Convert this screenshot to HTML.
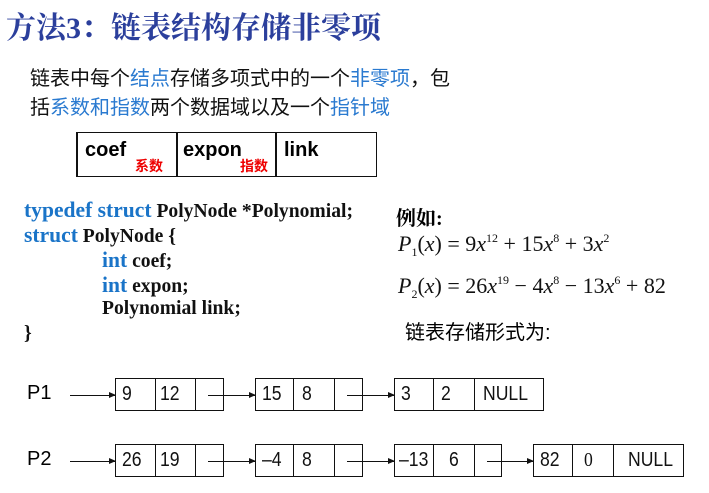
<!DOCTYPE html>
<html><head><meta charset="utf-8"><style>
body{margin:0;width:709px;height:493px;background:#fff;position:relative;overflow:hidden;font-family:"Liberation Sans","Noto Sans CJK SC",sans-serif}
.a{position:absolute;white-space:nowrap}
.t{font-family:"Liberation Serif","Noto Serif CJK SC",serif;font-weight:bold;color:#2b3f9c;font-size:30px;left:6px;top:3px}
.p{font-size:20px;color:#111;left:30px}
.b{color:#2a7ad0}
.code{font-family:"Liberation Serif",serif;font-weight:bold;font-size:20px;color:#111;transform:scaleX(0.98);transform-origin:left}
.kw{color:#1a74c8;font-size:22px}
.box{position:absolute;border:1.5px solid #111;box-sizing:border-box;height:33px}
.c{position:absolute;top:0;bottom:0;border-left:1.5px solid #111}
.n{position:absolute;font-size:20px;color:#111;top:4px;transform:scaleX(0.88);transform-origin:left}
.ar{position:absolute;height:1px;background:#111}
.ar:after{content:"";position:absolute;right:-1px;top:-3px;border-left:7px solid #111;border-top:3.5px solid transparent;border-bottom:3.5px solid transparent}
.m{font-family:"Liberation Serif",serif;font-size:22px;color:#111}
.m sup{font-size:12px;vertical-align:9px}
.m sub{font-size:12px;vertical-align:-5px}
</style></head><body>
<div class="a t">方法3：链表结构存储非零项</div>
<div class="a p" style="top:62px">链表中每个<span class="b">结点</span>存储多项式中的一个<span class="b">非零项</span>，包</div>
<div class="a p" style="top:91px">括<span class="b">系数和指数</span>两个数据域以及一个<span class="b">指针域</span></div>

<div class="a" style="left:76px;top:132px;width:300px;height:43px;border-top:1.5px solid #111;border-right:1.5px solid #111;border-bottom:1.5px solid #111"></div>
<div class="a" style="left:76px;top:132px;width:1.5px;height:44px;background:#111"></div>
<div class="a" style="left:176px;top:132px;width:1.5px;height:44px;background:#111"></div>
<div class="a" style="left:275px;top:132px;width:1.5px;height:44px;background:#111"></div>
<div class="a" style="left:85px;top:139px;font-size:20px;font-weight:bold">coef</div>
<div class="a" style="left:183px;top:139px;font-size:20px;font-weight:bold">expon</div>
<div class="a" style="left:284px;top:139px;font-size:20px;font-weight:bold">link</div>
<div class="a" style="left:135px;top:156px;font-size:14px;font-weight:bold;color:#e00">系数</div>
<div class="a" style="left:240px;top:156px;font-size:14px;font-weight:bold;color:#e00">指数</div>

<div class="a code" style="left:24px;top:197px"><span class="kw">typedef struct</span> PolyNode *Polynomial;</div>
<div class="a code" style="left:24px;top:222px"><span class="kw">struct</span> PolyNode {</div>
<div class="a code" style="left:102px;top:247px"><span class="kw">int</span> coef;</div>
<div class="a code" style="left:102px;top:272px"><span class="kw">int</span> expon;</div>
<div class="a code" style="left:102px;top:297px">Polynomial link;</div>
<div class="a code" style="left:24px;top:322px">}</div>

<div class="a" style="left:396px;top:202px;font-size:20px;font-weight:bold;font-family:'Liberation Serif','Noto Serif CJK SC',serif">例如:</div>
<div class="a m" style="left:398px;top:231px"><i>P</i><sub>1</sub>(<i>x</i>) = 9<i>x</i><sup>12</sup> + 15<i>x</i><sup>8</sup> + 3<i>x</i><sup>2</sup></div>
<div class="a m" style="left:398px;top:273px"><i>P</i><sub>2</sub>(<i>x</i>) = 26<i>x</i><sup>19</sup> − 4<i>x</i><sup>8</sup> − 13<i>x</i><sup>6</sup> + 82</div>
<div class="a" style="left:405px;top:316px;font-size:20px">链表存储形式为:</div>

<div class="a" style="left:27px;top:382px;font-size:20px">P1</div>
<div class="a" style="left:27px;top:448px;font-size:20px">P2</div>

<div class="ar" style="left:70px;top:395px;width:45px"></div>
<div class="box" style="left:115px;top:378px;width:109px"><div class="c" style="left:39px"></div><div class="c" style="left:79px"></div><span class="n" style="left:6px">9</span><span class="n" style="left:44px">12</span></div>
<div class="ar" style="left:208px;top:395px;width:47px"></div>
<div class="box" style="left:255px;top:378px;width:108px"><div class="c" style="left:37px"></div><div class="c" style="left:78px"></div><span class="n" style="left:6px">15</span><span class="n" style="left:46px">8</span></div>
<div class="ar" style="left:347px;top:395px;width:47px"></div>
<div class="box" style="left:394px;top:378px;width:150px"><div class="c" style="left:38px"></div><div class="c" style="left:79px"></div><span class="n" style="left:6px">3</span><span class="n" style="left:46px">2</span><span class="n" style="left:88px">NULL</span></div>

<div class="ar" style="left:70px;top:461px;width:45px"></div>
<div class="box" style="left:115px;top:444px;width:109px"><div class="c" style="left:39px"></div><div class="c" style="left:79px"></div><span class="n" style="left:6px">26</span><span class="n" style="left:44px">19</span></div>
<div class="ar" style="left:208px;top:461px;width:47px"></div>
<div class="box" style="left:255px;top:444px;width:108px"><div class="c" style="left:37px"></div><div class="c" style="left:78px"></div><span class="n" style="left:6px">–4</span><span class="n" style="left:46px">8</span></div>
<div class="ar" style="left:347px;top:461px;width:47px"></div>
<div class="box" style="left:394px;top:444px;width:108px"><div class="c" style="left:38px"></div><div class="c" style="left:79px"></div><span class="n" style="left:4px">–13</span><span class="n" style="left:54px">6</span></div>
<div class="ar" style="left:487px;top:461px;width:46px"></div>
<div class="box" style="left:533px;top:444px;width:151px"><div class="c" style="left:38px"></div><div class="c" style="left:79px"></div><span class="n" style="left:6px">82</span><span class="n" style="left:50px;font-family:'Liberation Serif',serif">0</span><span class="n" style="left:94px">NULL</span></div>
</body></html>
